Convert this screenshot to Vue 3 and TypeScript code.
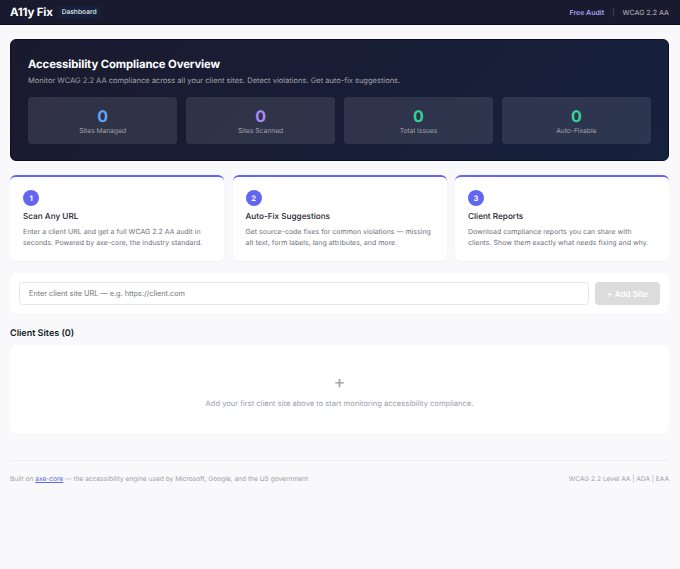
<script setup lang="ts">
const stats = [
  { label: 'Sites Managed', color: '#60a5fa' },
  { label: 'Sites Scanned', color: '#a78bfa' },
  { label: 'Total Issues', color: '#34d399' },
  { label: 'Auto-Fixable', color: '#34d399' }
]

const steps = [
  {
    title: 'Scan Any URL',
    text: 'Enter a client URL and get a full WCAG 2.2 AA audit in seconds. Powered by axe-core, the industry standard.'
  },
  {
    title: 'Auto-Fix Suggestions',
    text: 'Get source-code fixes for common violations — missing alt text, form labels, lang attributes, and more.'
  },
  {
    title: 'Client Reports',
    text: 'Download compliance reports you can share with clients. Show them exactly what needs fixing and why.'
  }
]
</script>

<template>
  <div class="page">
    <header class="topbar">
      <div class="brand">
        <span class="logo">A11y Fix</span>
        <span class="tag">Dashboard</span>
      </div>
      <nav class="nav">
        <a class="audit" href="#">Free Audit</a>
        <span class="sep">|</span>
        <span class="level">WCAG 2.2 AA</span>
      </nav>
    </header>

    <main class="content">
      <section class="hero">
        <h1>Accessibility Compliance Overview</h1>
        <p>Monitor WCAG 2.2 AA compliance across all your client sites. Detect violations. Get auto-fix suggestions.</p>
        <div class="stats">
          <div v-for="s in stats" :key="s.label" class="stat">
            <div class="num" :style="{ color: s.color }">0</div>
            <div class="label">{{ s.label }}</div>
          </div>
        </div>
      </section>

      <section class="steps">
        <div v-for="(s, i) in steps" :key="s.title" class="step">
          <div class="badge">{{ i + 1 }}</div>
          <h3>{{ s.title }}</h3>
          <p>{{ s.text }}</p>
        </div>
      </section>

      <form class="add" @submit.prevent>
        <input type="text" placeholder="Enter client site URL — e.g. https://client.com" />
        <button type="submit" disabled>+ Add Site</button>
      </form>

      <h2 class="sites-title">Client Sites (0)</h2>
      <section class="empty">
        <div class="plus">+</div>
        <p>Add your first client site above to start monitoring accessibility compliance.</p>
      </section>

      <footer class="foot">
        <span>Built on <a href="#">axe-core</a> — the accessibility engine used by Microsoft, Google, and the US government</span>
        <span>WCAG 2.2 Level AA | ADA | EAA</span>
      </footer>
    </main>
  </div>
</template>

<style>
html,
body {
  margin: 0;
  background: #f9f9fb;
}
</style>

<style scoped>
.page {
  min-height: 569px;
  background: #f9f9fb;
  font-family: Inter, "Liberation Sans", sans-serif;
  text-rendering: geometricPrecision;
  color: #1a1a2e;
}

.topbar {
  height: 25px;
  box-sizing: border-box;
  padding: 0 11px 0 10px;
  display: flex;
  align-items: center;
  justify-content: space-between;
  background: #1a1a2e;
  border-bottom: 1px solid #0f0f23;
}

.brand {
  display: flex;
  align-items: center;
  gap: 5px;
}

.logo {
  font-size: 11.5px;
  font-weight: 700;
  color: #fff;
  letter-spacing: -0.2px;
}

.tag {
  padding: 2px 4px;
  border-radius: 3px;
  background: #16213e;
  font-size: 6.7px;
  font-weight: 500;
  color: #e4e4e7;
}

.nav {
  display: flex;
  align-items: center;
  gap: 8px;
  font-size: 7px;
  font-weight: 500;
}

.audit {
  color: #a5a6f6;
  font-weight: 600;
  text-decoration: none;
}

.sep {
  color: #4b5563;
}

.level {
  color: #a1a1aa;
}

.content {
  padding: 14px 11px 0 10px;
}

.hero {
  padding: 16px 17px 16px;
  border-radius: 6px;
  border: 1px solid #0f0f23;
  background: linear-gradient(135deg, #1a1a2e 0%, #16213e 100%);
}

.hero h1 {
  margin: 0;
  font-size: 11.3px;
  line-height: 16px;
  font-weight: 700;
  color: #fff;
  letter-spacing: -0.1px;
}

.hero > p {
  margin: 3px 0 0;
  font-size: 7.5px;
  line-height: 11px;
  color: #a1a1aa;
}

.stats {
  margin-top: 11px;
  display: grid;
  grid-template-columns: repeat(4, 1fr);
  gap: 8.5px;
}

.stat {
  height: 47px;
  box-sizing: border-box;
  padding-top: 2px;
  border-radius: 4px;
  background: rgba(255, 255, 255, 0.1);
  text-align: center;
  display: flex;
  flex-direction: column;
  justify-content: center;
}

.num {
  font-size: 16px;
  line-height: 19px;
  font-weight: 700;
}

.label {
  font-size: 6.7px;
  line-height: 9px;
  margin-top: 1px;
  color: #a1a1aa;
}

.steps {
  margin-top: 14px;
  display: grid;
  grid-template-columns: repeat(3, 1fr);
  gap: 8.5px;
}

.step {
  padding: 13px 13px 12px;
  height: 86px;
  box-sizing: border-box;
  background: #fff;
  border-radius: 6px;
  border-top: 2px solid #6366f1;
  box-shadow: 0 1px 2px rgba(0, 0, 0, 0.03);
}

.badge {
  width: 16px;
  height: 16px;
  border-radius: 50%;
  background: #6366f1;
  color: #fff;
  font-size: 7.5px;
  font-weight: 700;
  display: flex;
  align-items: center;
  justify-content: center;
}

.step h3 {
  margin: 4px 0 0;
  font-size: 8.2px;
  line-height: 12px;
  font-weight: 500;
}

.step p {
  margin: 5px 0 0;
  font-size: 7px;
  line-height: 10.8px;
  color: #71717a;
}

.add {
  margin-top: 12px;
  padding: 9px;
  display: flex;
  gap: 6px;
  background: #fff;
  border-radius: 6px;
  box-shadow: 0 1px 2px rgba(0, 0, 0, 0.03);
}

.add input {
  flex: 1;
  height: 23px;
  box-sizing: border-box;
  padding: 0 9px;
  border: 1px solid #e5e7eb;
  border-radius: 4px;
  font-family: inherit;
  font-size: 7.3px;
  outline: none;
}

.add input::placeholder {
  color: #757575;
}

.add button {
  width: 65px;
  height: 23px;
  border: 0;
  border-radius: 4px;
  background: #dcdcdc;
  color: #fff;
  font-family: inherit;
  font-size: 8.2px;
  font-weight: 600;
}

.sites-title {
  margin: 14px 0 0;
  font-size: 9px;
  line-height: 12px;
  font-weight: 600;
  color: #111827;
}

.empty {
  margin-top: 5px;
  height: 89px;
  box-sizing: border-box;
  padding-top: 4px;
  background: #fff;
  border-radius: 6px;
  box-shadow: 0 1px 2px rgba(0, 0, 0, 0.03);
  text-align: center;
  display: flex;
  flex-direction: column;
  align-items: center;
  justify-content: center;
}

.plus {
  font-size: 18px;
  line-height: 18px;
  color: #a1a1aa;
}

.empty p {
  margin: 6px 0 0;
  font-size: 7.55px;
  line-height: 11px;
  color: #a1a1aa;
}

.foot {
  margin-top: 26px;
  padding-top: 13px;
  border-top: 1px solid #eceef2;
  display: flex;
  justify-content: space-between;
  font-size: 6.6px;
  line-height: 10px;
  color: #a1a1aa;
}

.foot a {
  color: #6366f1;
}
</style>
